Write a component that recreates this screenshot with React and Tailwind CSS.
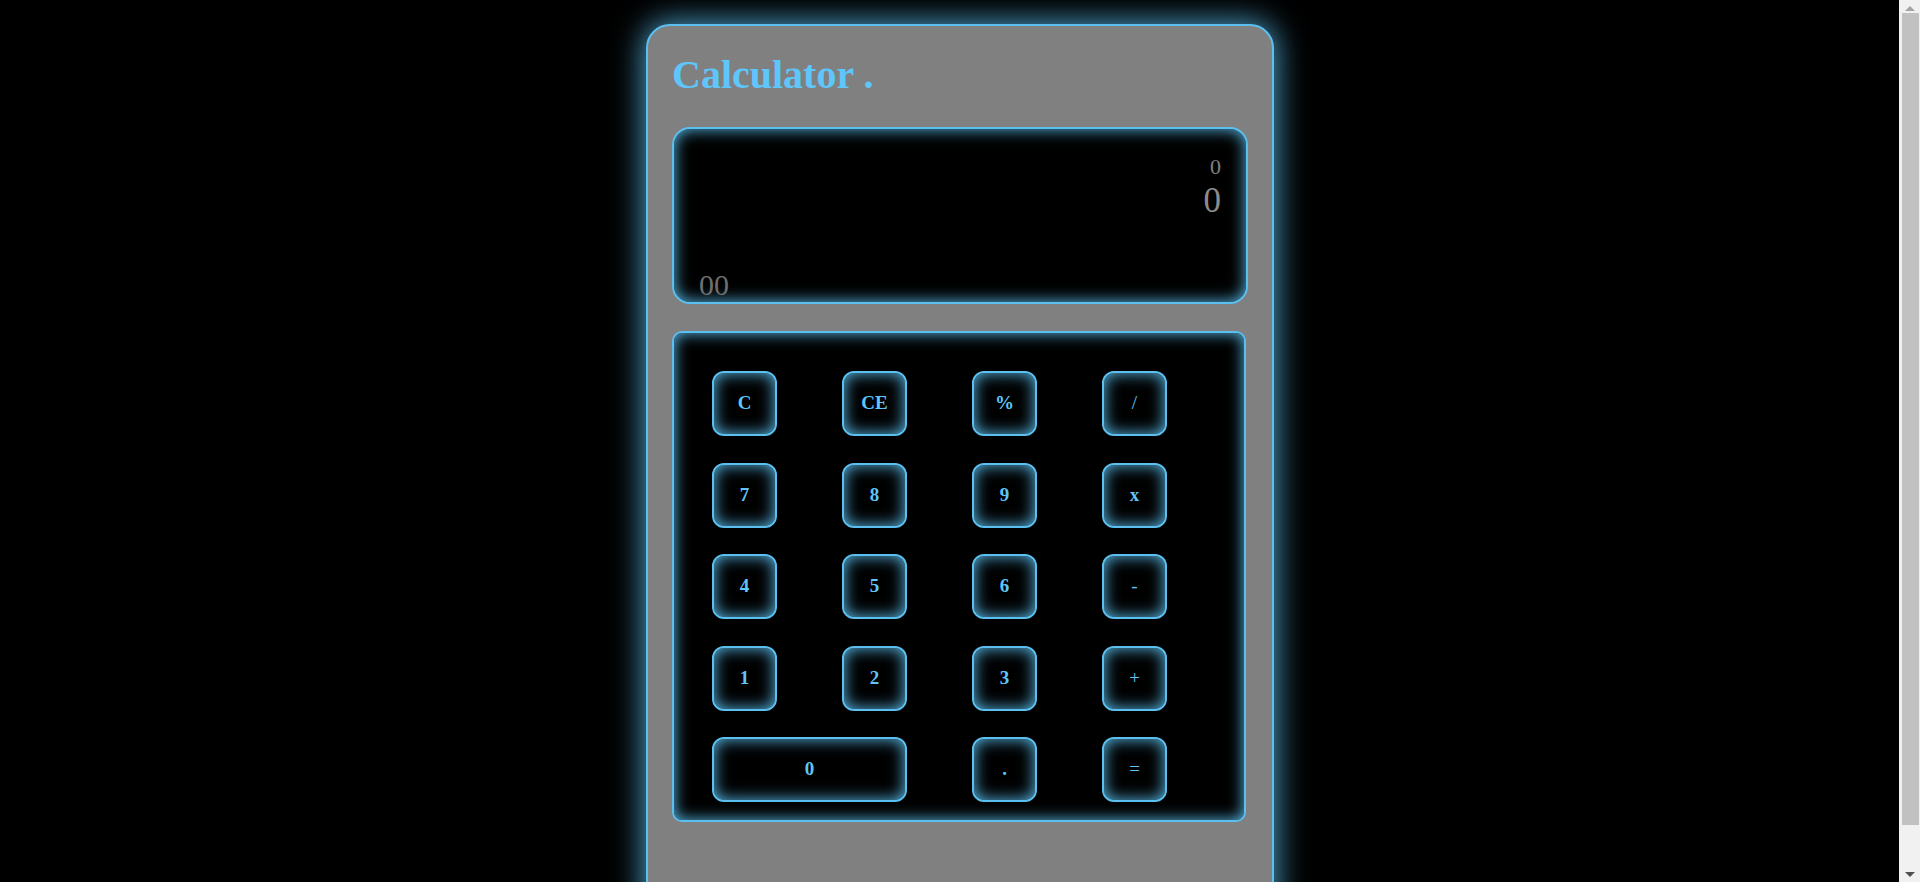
import React from 'react';

const keys = [
    { label: 'C' },
    { label: 'CE' },
    { label: '%' },
    { label: '/', thin: true },
    { label: '7' },
    { label: '8' },
    { label: '9' },
    { label: 'x' },
    { label: '4' },
    { label: '5' },
    { label: '6' },
    { label: '-', thin: true },
    { label: '1' },
    { label: '2' },
    { label: '3' },
    { label: '+', thin: true },
    { label: '0', wide: true },
    { label: '.' },
    { label: '=', thin: true },
];

const Key = ({ label, wide, thin }) => (
    <button
        type="button"
        className={`${wide ? 'col-span-2' : ''} h-[65px] flex items-center justify-center rounded-[12px] border-2 border-[#5bc0f0] bg-black shadow-[inset_0_0_16px_#5bc0f0] text-[19px] text-[#5ec6fa] ${thin ? 'font-normal' : 'font-bold'}`}
    >
        {label}
    </button>
);

// the page's scrollbar, as it shows in the window
const Scrollbar = () => (
    <div className="fixed top-0 right-0 w-[21px] h-screen bg-[#f1f1f1] flex flex-col items-center">
        <svg width="10" height="6" viewBox="0 0 10 6" className="mt-[5px]">
            <path d="M0 6 L5 1 L10 6 Z" fill="#a3a3a3" />
        </svg>
        <div className="mt-[2px] w-[17px] h-[812px] bg-[#c1c1c1] ml-[2px]" />
        <div className="flex-1" />
        <svg width="10" height="6" viewBox="0 0 10 6" className="mb-[4px]">
            <path d="M0 0 L10 0 L5 5 Z" fill="#505050" />
        </svg>
    </div>
);

const App = () => {
    return (
        <div className="min-h-screen bg-black flex items-start justify-center py-[24px] font-['Liberation_Serif',serif]">
            <div className="shrink-0 w-[628px] h-[900px] bg-[#808080] border-2 border-[#5bc0f0] rounded-[24px] shadow-[0_0_30px_3px_rgba(91,192,240,0.8)] px-[24px] pt-[24px] flex flex-col">
                <h1 className="mt-[5px] text-[40px] leading-none font-bold text-[#5ec6fa]">Calculator .</h1>

                {/* display */}
                <div className="mt-[32px] h-[177px] bg-black border-2 border-[#5bc0f0] rounded-[18px] shadow-[inset_0_0_16px_#5bc0f0] pt-[27px] pb-[2px] px-[25px] flex flex-col justify-between">
                    <div className="flex flex-col items-end">
                        <div className="text-[22px] leading-none text-[#808080]">0</div>
                        <div className="mt-[5px] text-[35px] leading-none text-[#8c8c8c]">0</div>
                    </div>
                    <div className="text-[30px] leading-none text-[#6e6e6e]">00</div>
                </div>

                {/* keypad */}
                <div className="mt-[27px] w-[574px] bg-black border-2 border-[#5bc0f0] rounded-[10px] shadow-[inset_0_0_15px_#5bc0f0] pt-[38px] pb-[18px] pl-[38px]">
                    <div className="grid grid-cols-[repeat(4,65px)] gap-x-[65px] gap-y-[26.5px]">
                        {keys.map((k) => (
                            <Key key={k.label + (k.wide ? 'w' : '')} {...k} />
                        ))}
                    </div>
                </div>
            </div>
            <Scrollbar />
        </div>
    );
};

export default App;
